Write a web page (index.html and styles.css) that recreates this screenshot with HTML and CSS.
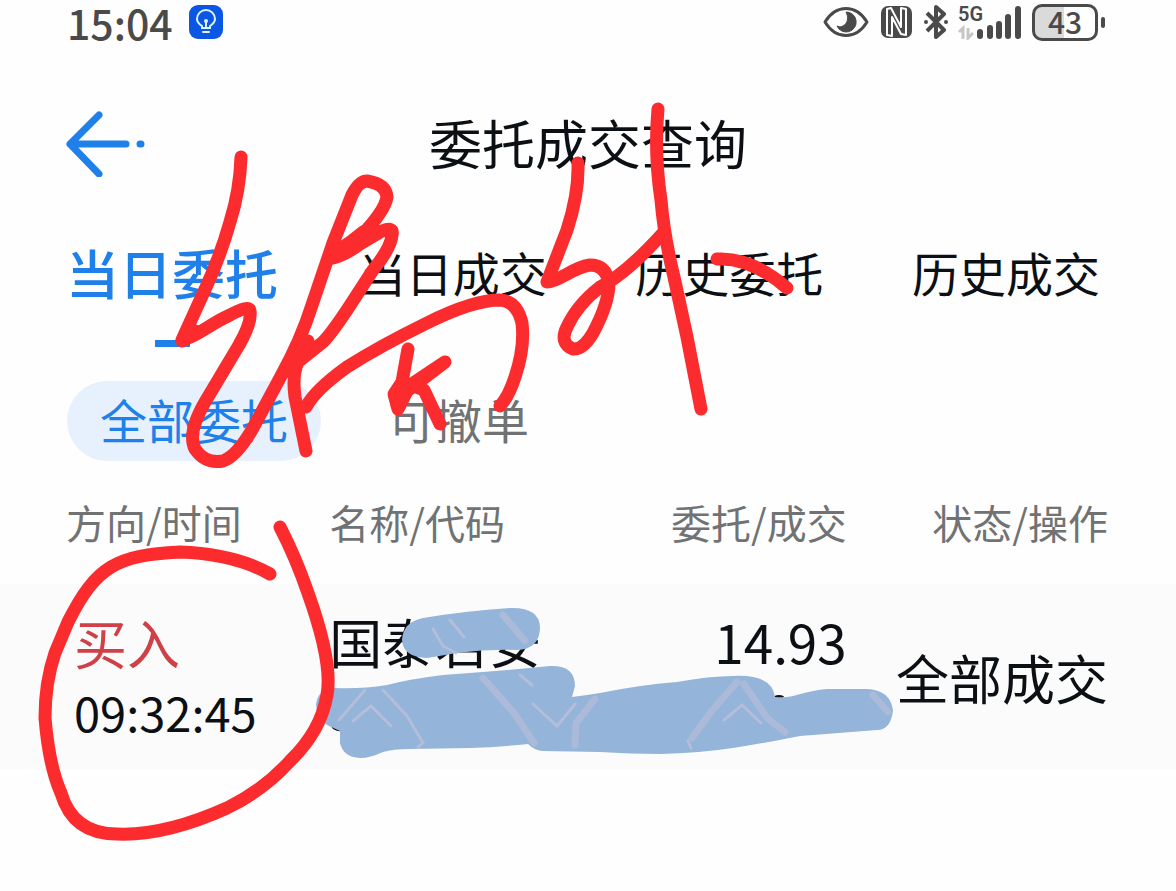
FILE: index.html
```html
<!DOCTYPE html>
<html lang="zh-CN">
<head>
    <meta charset="UTF-8">
    <meta name="viewport" content="width=device-width, initial-scale=1.0">
    <title>委托成交查询</title>
    <link rel="stylesheet" href="styles.css">
</head>
<body>
    <div class="status-bar">
        <span class="clock">15:04</span>
        <svg class="bulb" width="34" height="34" viewBox="0 0 34 34">
            <rect width="34" height="34" rx="9" fill="#0b57e3"/>
            <g fill="none" stroke="#d9f6ff" stroke-width="2" stroke-linecap="round">
                <path d="M13 23v-2c-3-2-5-4-5-7a9 9 0 0 1 18 0c0 3-2 5-5 7v2z"/>
                <path d="M17 17v6M14 27h6"/>
            </g>
            <circle cx="17" cy="16" r="2" fill="#d9f6ff"/>
        </svg>
        <div class="status-icons">
            <svg width="46" height="32" viewBox="0 0 46 32">
                <path d="M2 16C13-2 33-2 44 16C33 34 13 34 2 16Z" fill="none" stroke="#4a4a4a" stroke-width="3" stroke-linejoin="round"/>
                <path d="M23 6a10 10 0 1 1-9 14c6 3 14-4 9-14Z" fill="#4a4a4a" stroke="#4a4a4a" stroke-width="1"/>
            </svg>
            <svg class="nfc" width="31" height="32" viewBox="0 0 31 32">
                <rect width="31" height="32" rx="7" fill="#4a4a4a"/>
                <path d="M6 3v26l5 1V11l9 17 5 1V3l-5-1v19L10 2z" fill="none" stroke="#fff" stroke-width="2" stroke-linejoin="round"/>
            </svg>
            <svg class="bluetooth" width="26" height="34" viewBox="0 0 26 34">
                <path d="M4 8l17 17-8 7V2l8 7L4 26" fill="none" stroke="#4a4a4a" stroke-width="4" stroke-linejoin="round"/>
                <circle cx="3" cy="17" r="2" fill="#4a4a4a"/><circle cx="23" cy="17" r="2" fill="#4a4a4a"/>
            </svg>
            <div class="signal">
                <span class="network">5G</span>
                <svg width="64" height="36" viewBox="0 0 64 36">
                    <path d="M22 28v4M32 24v8M41 20v12M50 13v19M60 5v27" stroke="#4a4a4a" stroke-width="6" stroke-linecap="round"/>
                    <path d="M1 28l4-4v11M10 24v10l5-5" fill="none" stroke="#c6c6c6" stroke-width="3"/>
                </svg>
            </div>
            <div class="battery"><span>43</span></div>
        </div>
    </div>
    <header>
        <a class="back" href="#" aria-label="返回">
            <svg width="80" height="66" viewBox="0 0 80 66">
                <path d="M33 4L4 33l29 30M4 33h56M74 33h1" fill="none" stroke="#2080ea" stroke-width="7" stroke-linecap="round" stroke-linejoin="round"/>
            </svg>
        </a>
        <h1>委托成交查询</h1>
    </header>
    <nav class="tabs">
        <a class="active" href="#today-orders">当日委托</a>
        <a href="#today-deals">当日成交</a>
        <a href="#history-orders">历史委托</a>
        <a href="#history-deals">历史成交</a>
    </nav>
    <div class="filters">
        <button class="selected" type="button">全部委托</button>
        <button type="button">可撤单</button>
    </div>
    <table>
        <thead>
            <tr>
                <th class="direction">方向/时间</th>
                <th class="name">名称/代码</th>
                <th class="price">委托/成交</th>
                <th class="state">状态/操作</th>
            </tr>
        </thead>
        <tbody>
            <tr>
                <td class="direction"><span class="buy">买入</span><time>09:32:45</time></td>
                <td class="name">国泰君安</td>
                <td class="price">14.93</td>
                <td class="state">全部成交</td>
            </tr>
        </tbody>
    </table>

    <!-- hand-drawn marks over the order list -->
    <svg class="marks" width="1176" height="891" viewBox="0 0 1176 891" aria-hidden="true">
        <path d="M333 726q4 4 9 3M775 698q4-2 8 0" fill="none" stroke="#111" stroke-width="4"/>
        <g fill="#94b4da">
            <path d="M402 640Q403 622 423 618Q465 611 510 608Q539 607 540 627Q540 649 517 650Q487 649 457 653L427 658Q403 657 402 640Z"/>
            <path d="M335 688Q362 689 387 685Q410 679 443 675Q500 671 550 666Q575 665 575 686L572 697Q588 695 600 693Q639 685 677 682Q709 676 733 676Q772 674 775 697Q785 698 793 696Q814 690 827 689H867Q890 690 893 710Q891 730 877 730L800 736Q765 743 733 748Q700 753 660 754Q630 754 600 752L543 751Q535 751 528 744Q500 747 470 748L410 749Q393 749 383 752Q370 758 360 758Q343 757 340 743V731L327 725Q316 716 316 704Q318 689 335 688Z"/>
        </g>
        <g fill="none" stroke="#b6bdd9" stroke-width="7" stroke-linecap="round" opacity="0.7">
            <path d="M503 615l22 26M483 678l31 35 20 30"/>
            <path d="M595 699l-19 24-1 22M737 682l-26 30-19 26M744 684l23 34 18 14"/>
            <path d="M873 695l15 17"/>
        </g>
        <g fill="none" stroke="#bbbfd8" stroke-width="3" stroke-linecap="round" opacity="0.8">
            <path d="M433 629l10 17 13 7M450 620l14 17M383 690l24 26 16 27-5 4M353 721l18-15 20 20M365 690l-26 30"/>
            <path d="M520 675l12 10M533 704l24 22 18-22M724 720l18-15 19 18M688 741l3 7"/>
        </g>
        <g class="pen">
            <path d="M241 157Q240 190 230 222Q221 254 207 285L182 340C195 338 210 324 228 316Q250 304 250 311Q252 322 239 345L205 402Q187 433 195 449Q205 464 223 461Q237 456 253 428L281 376Q301 340 312 305L333 243L352 195Q359 181 367 181Q386 184 387 197Q385 211 360 237L333 258Q345 255 360 244L382 231Q394 226 392 235Q391 248 373 270L347 310Q331 334 323 342L298 362Q292 375 295 397L306 451"/>
            <path d="M182 341l13-10M335 252l14-9 14-11M301 354l7-13" />
            <path d="M306 407Q315 390 347 367Q380 346 427 323Q473 300 500 300Q517 301 522 323Q525 347 515 377Q509 396 500 406"/>
            <path d="M408 349L402 382L394 394L398 409L407 391L445 362L400 392M408 384L424 390L440 424"/>
            <path d="M578 163Q579 193 567 230L547 282C559 282 573 267 590 265Q606 265 609 283Q609 303 593 333Q583 350 573 349Q559 343 567 327Q577 305 600 287Q626 274 663 233"/>
            <path d="M658 109Q654 154 661 200Q664 236 674 277L687 337L701 409"/>
            <path d="M717 259Q751 257 787 288"/>
            <path d="M270 574Q235 554 180 552C117 555 96 566 68 622L55 653Q45 682 45 718Q49 766 61 793Q73 834 117 834Q165 836 227 808Q264 790 290 761Q321 731 327 695Q333 663 308 593Q296 558 280 527"/>
        </g>
    </svg>
</body>
</html>
```

FILE: styles.css
```css
* {
    box-sizing: border-box;
}
body {
    position: relative;
    min-height: 100vh;
    margin: 0;
    background-color: #fefefe;
    color: #0c1014;
    font-family: "Noto Sans CJK SC", sans-serif;
}
svg {
    display: block;
    flex: none;
}
a {
    color: inherit;
    text-decoration: none;
}
.status-bar {
    display: flex;
    align-items: center;
    height: 44px;
    padding: 0 78px 0 67px;
    color: #4a4a4a;
}
.clock {
    font-size: 41px;
    font-weight: 500;
    line-height: 42px;
}
.bulb {
    margin-left: 16px;
}
.status-icons {
    display: flex;
    align-items: center;
    margin-left: auto;
}
.nfc {
    margin-left: 12px;
}
.bluetooth {
    margin-left: 11px;
}
.signal {
    position: relative;
    margin-left: 9px;
}
.network {
    position: absolute;
    top: 0;
    left: 0;
    font-family: Roboto, sans-serif;
    font-size: 20px;
    font-weight: 600;
    line-height: 20px;
}
.battery {
    position: relative;
    width: 66px;
    height: 37px;
    margin-left: 10px;
    border: 3px solid #4a4a4a;
    border-radius: 10px;
    background: linear-gradient(to right, #dadada 48%, #fefefe 48%);
    font-size: 30px;
    font-weight: 500;
    line-height: 28px;
    text-align: center;
}
.battery::after {
    content: "";
    position: absolute;
    top: 10px;
    right: -10px;
    width: 4px;
    height: 11px;
    border-radius: 2px;
    background-color: #4a4a4a;
}
header {
    display: grid;
    grid-template-columns: 1fr auto 1fr;
    align-items: center;
    height: 100px;
    margin-top: 50px;
    padding: 0 66px;
}
h1 {
    margin: 0;
    padding-bottom: 4px;
    font-size: 53px;
    font-weight: 400;
    line-height: 60px;
}
.tabs {
    display: flex;
    justify-content: space-between;
    align-items: center;
    height: 60px;
    margin-top: 48px;
    padding: 0 76px 0 66px;
    font-size: 47px;
    line-height: 60px;
}
.tabs .active {
    position: relative;
    margin-right: -8px;
    color: #2080ea;
    font-size: 53px;
    font-weight: 500;
}
.tabs .active::after {
    content: "";
    position: absolute;
    bottom: -45px;
    left: 50%;
    width: 35px;
    height: 7px;
    margin-left: -17px;
    background-color: #2080ea;
}
.filters {
    display: flex;
    gap: 34px;
    margin-top: 79px;
    padding: 0 67px;
}
.filters button {
    height: 80px;
    padding: 0 33px 4px;
    border: 0;
    border-radius: 40px;
    background: none;
    color: #707273;
    font-family: inherit;
    font-size: 47px;
    line-height: 60px;
}
.filters .selected {
    background-color: #e7f1fd;
    color: #2080ea;
}
table {
    width: 100%;
    margin-top: 33px;
    border-collapse: collapse;
    table-layout: fixed;
}
th, td {
    padding: 0;
    font-weight: 400;
    text-align: left;
}
th {
    height: 90px;
    padding-bottom: 34px;
    color: #707273;
    font-size: 40px;
    line-height: 56px;
}
td {
    height: 185px;
    font-size: 53px;
    line-height: 60px;
}
tbody tr {
    background-color: #fbfbfb;
}
.direction {
    width: 28%;
    padding-left: 66px;
}
.name, .price {
    width: 22%;
}
td.direction {
    padding-left: 74px;
}
td.name, td.price {
    padding-top: 27px;
    vertical-align: top;
}
.price, .state {
    text-align: right;
}
.state {
    padding-right: 68px;
}
.buy {
    display: block;
    color: #cf4047;
    line-height: 70px;
}
time {
    display: block;
    font-size: 47px;
    line-height: 70px;
}
.marks {
    position: absolute;
    top: 0;
    left: 0;
}
.pen {
    fill: none;
    stroke: #fc2b2e;
    stroke-width: 13;
    stroke-linecap: round;
    stroke-linejoin: round;
}
```
